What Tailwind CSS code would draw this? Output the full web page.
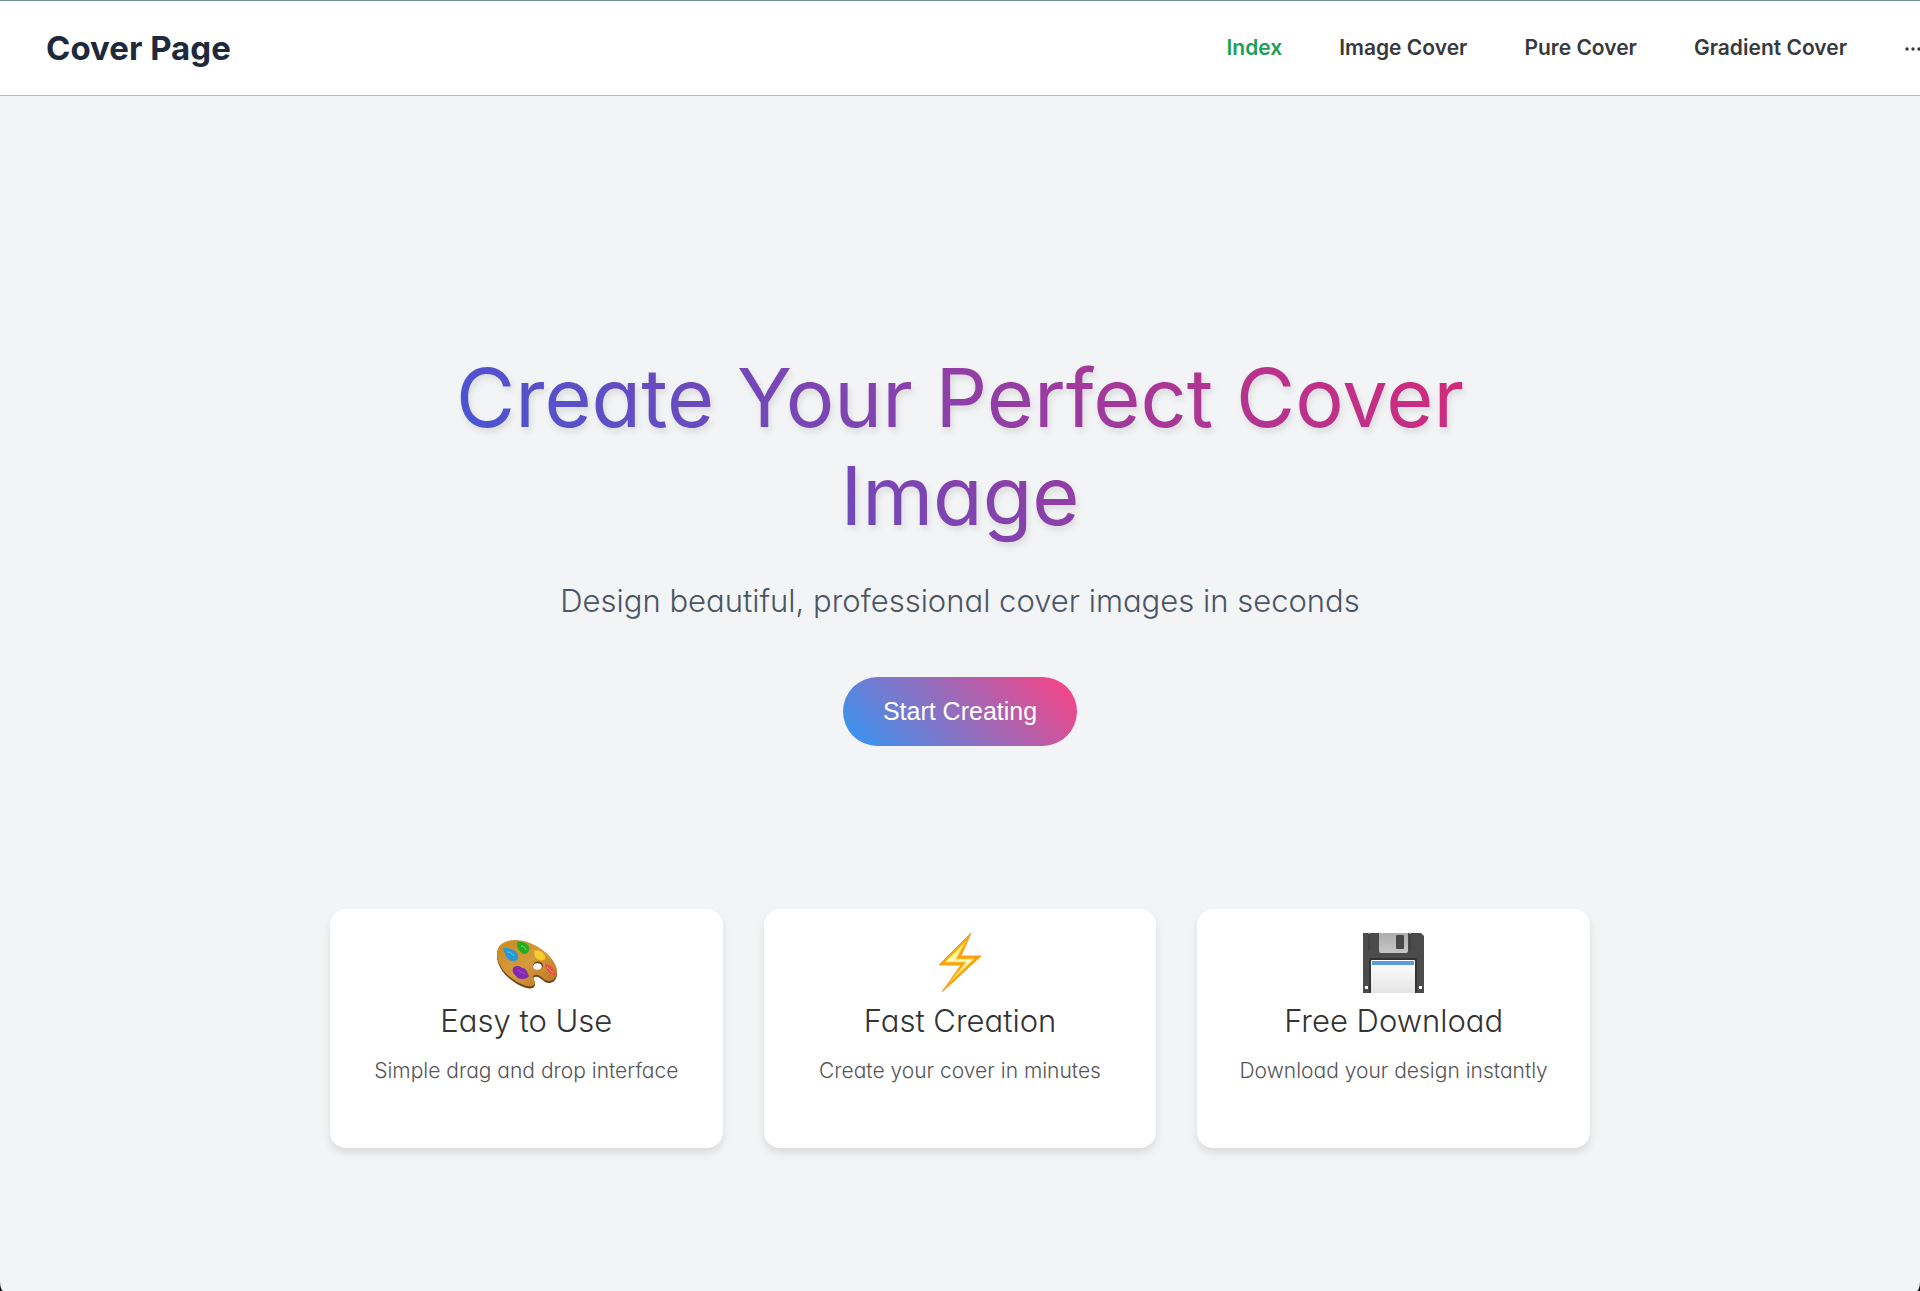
<!DOCTYPE html>
<html lang="en" class="bg-black">
<head>
<meta charset="utf-8">
<meta name="viewport" content="width=device-width, initial-scale=1">
<title>Cover Page</title>
<script src="https://cdn.jsdelivr.net/npm/@tailwindcss/browser@4"></script>
</head>
<body class="flex min-h-screen flex-col overflow-x-hidden rounded-bl-[3px_10px] rounded-br-[3px_10px] bg-[#f3f4f6] font-['Inter',sans-serif] text-[#333]">
<header class="flex h-24 items-center justify-between border-t border-b border-t-[#6f9188] border-b-[#b9bcbe] bg-white pl-[46px]">
  <a href="#" class="pt-0.5 text-[33px] font-bold text-[#1e293b]">Cover Page</a>
  <nav class="-mr-2 flex items-center gap-[57px] text-[21px] font-semibold whitespace-nowrap text-[#37393d]">
    <a href="#" class="text-[#18a058]">Index</a>
    <a href="#">Image Cover</a>
    <a href="#">Pure Cover</a>
    <a href="#">Gradient Cover</a>
    <button type="button" aria-label="More pages">
      <svg class="h-5 w-6" viewBox="0 0 24 20" fill="currentColor" aria-hidden="true"><circle cx="3" cy="11" r="1.7"/><circle cx="9" cy="11" r="1.7"/><circle cx="15" cy="11" r="1.7"/></svg>
    </button>
  </nav>
</header>
<main class="mx-auto flex w-full max-w-[1260px] flex-col [font-feature-settings:'cv11']">
  <section class="flex flex-col items-center pt-[253px] text-center">
    <h1 class="max-w-[1060px] bg-[linear-gradient(45deg,#355bdf,#db2777)] bg-clip-text text-[81px] leading-[98px] text-transparent drop-shadow-[2px_4px_3px_rgba(0,0,0,0.1)]">Create Your Perfect Cover Image</h1>
    <p class="mt-8 text-[31px] leading-[48px] font-light text-[#4b5563]">Design beautiful, professional cover images in seconds</p>
    <button type="button" class="mt-[52px] h-[69px] rounded-full bg-[linear-gradient(45deg,#3097f5,#ff4081)] px-10 font-['Liberation_Sans',Arial,sans-serif] text-[25px] text-white">Start Creating</button>
  </section>
  <section class="mt-[163px] grid grid-cols-3 gap-[41px]">
    <article class="flex h-[239px] flex-col items-center rounded-2xl bg-white pt-5 text-center shadow-[0_5px_8px_rgba(0,0,0,0.1)]">
      <svg class="h-16 w-16" viewBox="0 0 64 64" aria-hidden="true">
        <defs><linearGradient id="wood" x1="0" y1="0" x2="1" y2="1"><stop offset="0" stop-color="#c98a20"/><stop offset=".5" stop-color="#d69a3c"/><stop offset="1" stop-color="#b87524"/></linearGradient></defs>
        <g transform="translate(1 0)">
        <path d="M2 26C2 17 9 12 20 12c19 0 40 16 42 31 .6 8-5 13-12 10-3-2-6-6-10-5-4 1 0 5 0 8-1 5-8 4-14 1C13 51 2 39 2 27z" fill="#704018"/>
        <path d="M2 25C2 16 9 11 20 11c19 0 40 16 42 30 .6 8-5 13-12 10-3-2-6-6-10-5-4 1 0 5 0 8-1 5-8 4-14 1C13 49 2 37 2 25z" fill="url(#wood)"/>
        <ellipse cx="43" cy="36.500" rx="5" ry="4" fill="#704018"/><ellipse cx="42.500" cy="37.500" rx="4.200" ry="3.200" fill="#fff"/>
        <path d="M8 20c3-2 5-1 8 0 6 2 8 6 7 10-4 5-11 1-13-5z" fill="#249bd5"/><path d="M12 23c3 0 5 1 7 4" fill="none" stroke="#5cc4ee" stroke-width="1"/>
        <path d="M22 13c4-1 10 0 12 5 1 3-1 7-5 7-4-1-8-6-7-12z" fill="#24ad22"/><path d="M26 17c2 0 4 1 5 4" fill="none" stroke="#6bdf52" stroke-width="1"/>
        <path d="M39 22c6-2 12 3 11 8-3 3-9 1-10-3z" fill="#f6cf2d"/>
        <path d="M50 35c5 0 10 5 11 11-5 1-10-4-11-11z" fill="#f0503f"/><path d="M52 38l6 6" stroke="#ff917f" stroke-width="1"/>
        <path d="M18 39c3-3 7-2 9 0 5 0 5 5 7 8-2 4-11 4-13 0-3-2-4-5-3-8z" fill="#8328b5"/><path d="M23 41c2 1 4 3 7 4" fill="none" stroke="#a754d2" stroke-width="1"/>
        </g>
      </svg>
      <h2 class="mt-1 text-[31px] leading-[48px] font-light">Easy to Use</h2>
      <p class="mt-[10px] text-[21px] leading-8 font-light text-[#555]">Simple drag and drop interface</p>
    </article>
    <article class="flex h-[239px] flex-col items-center rounded-2xl bg-white pt-5 text-center shadow-[0_5px_8px_rgba(0,0,0,0.1)]">
      <svg class="h-16 w-16" viewBox="0 0 64 64" aria-hidden="true">
        <defs><linearGradient id="bolt" x1="0" y1="0" x2="0" y2="1"><stop offset="0" stop-color="#ffe45c"/><stop offset=".5" stop-color="#ffffc8"/><stop offset="1" stop-color="#ffe23c"/></linearGradient></defs>
        <path d="M43 4 11 36H33L14 63 53 27H33z" fill="#fba013" stroke="#fba013" stroke-linejoin="round"/>
        <path d="M38 12 17 33H38L22 53 46 30H28z" fill="url(#bolt)" stroke="#ffce2e"/>
      </svg>
      <h2 class="mt-1 text-[31px] leading-[48px] font-light">Fast Creation</h2>
      <p class="mt-[10px] text-[21px] leading-8 font-light text-[#555]">Create your cover in minutes</p>
    </article>
    <article class="flex h-[239px] flex-col items-center rounded-2xl bg-white pt-5 text-center shadow-[0_5px_8px_rgba(0,0,0,0.1)]">
      <svg class="h-16 w-16" viewBox="0 0 64 64" aria-hidden="true">
        <defs><linearGradient id="label" x1="0" y1="0" x2="0" y2="1"><stop offset="0" stop-color="#fff"/><stop offset="1" stop-color="#e4e4e4"/></linearGradient><linearGradient id="shutter" x1="0" y1="0" x2="0" y2="1"><stop offset="0" stop-color="#adadad"/><stop offset="1" stop-color="#c6c6c6"/></linearGradient></defs>
        <path d="M1 4H59L62 7V64H1z" fill="#4b4b4b"/>
        <path d="M7 4v18M48 4v18" stroke="#3b3b3b"/><path d="M6 4h2M47 4h2" stroke="#ddd"/>
        <path d="M17 4H46V22q0 2-2 2H19q-2 0-2-2z" fill="url(#shutter)"/><rect x="34" y="6" width="8" height="14" rx="1" fill="#484848"/>
        <path d="M7 64V32q0-3 3-3H52q3 0 3 3V64" fill="#333"/>
        <path d="M9 64V32q0-1 1-1H52q1 0 1 1V64z" fill="url(#label)"/><path d="M10 32H52v4H10z" fill="#5b9bd8"/>
        <path d="M3 57h3v3H3zM57 57h3v3h-3z" fill="#fff"/>
      </svg>
      <h2 class="mt-1 text-[31px] leading-[48px] font-light">Free Download</h2>
      <p class="mt-[10px] text-[21px] leading-8 font-light text-[#555]">Download your design instantly</p>
    </article>
  </section>
</main>
</body>
</html>
